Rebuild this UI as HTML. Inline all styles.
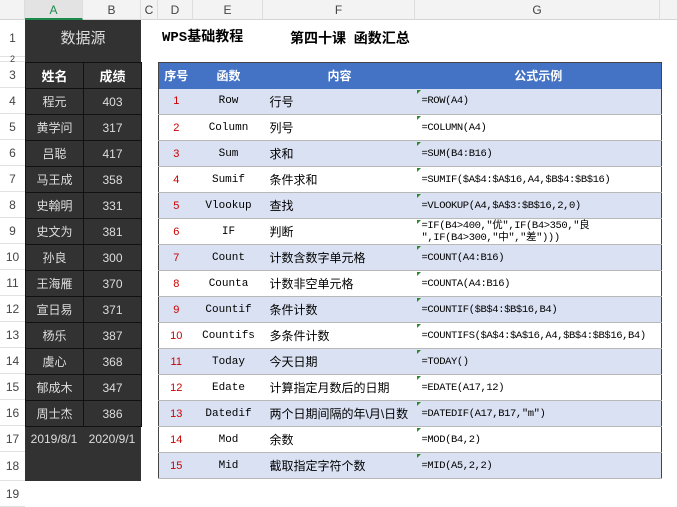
<!DOCTYPE html>
<html><head><meta charset="utf-8"><style>
*{margin:0;padding:0;box-sizing:border-box}
body{width:677px;height:500px;overflow:hidden;background:#fff;font-family:"Liberation Sans","Noto Sans CJK SC",sans-serif;position:relative}
.ch{position:absolute;top:0;height:20px;background:#f3f3f3;border-bottom:1px solid #d4d4d4;width:677px;font-size:12px;color:#444}
.ch div{position:absolute;top:0;height:20px;line-height:20px;text-align:center;border-right:1px solid #ddd}
.rh{position:absolute;left:0;width:25px;font-size:12px;color:#444;text-align:center}
.rh div{position:absolute;left:0;width:25px;border-bottom:1px solid #e2e2e2}
.dark{position:absolute;left:25px;top:20px;width:116px;height:461px;background:#323232;color:#eee}
table{border-collapse:collapse;position:absolute;table-layout:fixed}
.l td{border:1px solid #111;height:26px;text-align:center;font-size:12px;color:#ddd}
.t{left:158px;top:62px;width:503px;border:1px solid #444}
.t td{height:26px;font-size:11px;border-bottom:1px solid #b8b8b8;white-space:nowrap;overflow:hidden;padding:0}
.t tr:nth-child(even) td{background:#d9e1f2}
.t th{background:#4472c4;color:#fff;height:26px;font-size:12px;white-space:nowrap;padding:0}
.n{color:#c00;text-align:center}
.f{text-align:center;font-family:"Liberation Mono","Noto Sans CJK SC",monospace}
.c{padding-left:6px!important;font-size:12px!important}
.g{padding-left:6px!important;font-family:"Liberation Mono","Noto Sans CJK SC",monospace;font-size:10.5px!important;position:relative;letter-spacing:-0.4px}
.g:before{content:"";position:absolute;left:1px;top:1px;border-top:4px solid #2a8a2a;border-right:4px solid transparent}
</style></head><body>
<div class="ch">
<div style="left:0;width:25px"></div>
<div style="left:25px;width:58px;background:#e3e3e3;color:#1a8a4a;border-bottom:2px solid #1a8a4a">A</div>
<div style="left:83px;width:58px">B</div>
<div style="left:141px;width:17px">C</div>
<div style="left:158px;width:35px">D</div>
<div style="left:193px;width:70px">E</div>
<div style="left:263px;width:152px">F</div>
<div style="left:415px;width:245px">G</div>
</div>
<div class="rh">
<div style="top:20px;height:37px;line-height:37px">1</div>
<div style="top:57px;height:5px;line-height:5px;font-size:9px">2</div>
<div style="top:62px;height:26px;line-height:26px">3</div>
<div style="top:88px;height:26px;line-height:26px">4</div>
<div style="top:114px;height:26px;line-height:26px">5</div>
<div style="top:140px;height:26px;line-height:26px">6</div>
<div style="top:166px;height:26px;line-height:26px">7</div>
<div style="top:192px;height:26px;line-height:26px">8</div>
<div style="top:218px;height:26px;line-height:26px">9</div>
<div style="top:244px;height:26px;line-height:26px">10</div>
<div style="top:270px;height:26px;line-height:26px">11</div>
<div style="top:296px;height:26px;line-height:26px">12</div>
<div style="top:322px;height:26px;line-height:26px">13</div>
<div style="top:348px;height:26px;line-height:26px">14</div>
<div style="top:374px;height:26px;line-height:26px">15</div>
<div style="top:400px;height:26px;line-height:26px">16</div>
<div style="top:426px;height:26px;line-height:26px">17</div>
<div style="top:452px;height:29px;line-height:29px">18</div>
<div style="top:481px;height:26px;line-height:26px">19</div>
</div>
<div class="dark">
<div style="height:37px;line-height:37px;text-align:center;font-size:15px;color:#ddd">数据源</div>
</div>
<table class="l" style="left:25px;top:62px">
<tr><td style="width:58px;font-weight:bold;font-size:13px;color:#fff">姓名</td><td style="width:58px;font-weight:bold;font-size:13px;color:#fff">成绩</td></tr>
<tr><td>程元</td><td>403</td></tr><tr><td>黄学问</td><td>317</td></tr><tr><td>吕聪</td><td>417</td></tr><tr><td>马王成</td><td>358</td></tr><tr><td>史翰明</td><td>331</td></tr><tr><td>史文为</td><td>381</td></tr><tr><td>孙良</td><td>300</td></tr><tr><td>王海雁</td><td>370</td></tr><tr><td>宣日易</td><td>371</td></tr><tr><td>杨乐</td><td>387</td></tr><tr><td>虞心</td><td>368</td></tr><tr><td>郁成木</td><td>347</td></tr><tr><td>周士杰</td><td>386</td></tr>
</table>
<div style="position:absolute;left:25px;top:426px;width:116px;height:26px;line-height:26px;color:#ddd;font-size:12px;display:flex"><span style="width:58px;text-align:center">2019/8/1</span><span style="width:58px;text-align:center">2020/9/1</span></div>
<div style="position:absolute;left:162px;top:20px;height:37px;line-height:37px;font-size:14px;font-weight:bold;font-family:'Liberation Mono','Noto Sans CJK SC',monospace">WPS基础教程</div>
<div style="position:absolute;left:290px;top:20px;height:37px;line-height:37px;font-size:14px;font-weight:bold">第四十课&nbsp;&nbsp;函数汇总</div>
<table class="t">
<colgroup><col style="width:35px"><col style="width:70px"><col style="width:152px"><col style="width:246px"></colgroup>
<tr><th>序号</th><th>函数</th><th>内容</th><th>公式示例</th></tr>
<tr><td class="n">1</td><td class="f">Row</td><td class="c">行号</td><td class="g">=ROW(A4)</td></tr>
<tr><td class="n">2</td><td class="f">Column</td><td class="c">列号</td><td class="g">=COLUMN(A4)</td></tr>
<tr><td class="n">3</td><td class="f">Sum</td><td class="c">求和</td><td class="g">=SUM(B4:B16)</td></tr>
<tr><td class="n">4</td><td class="f">Sumif</td><td class="c">条件求和</td><td class="g">=SUMIF($A$4:$A$16,A4,$B$4:$B$16)</td></tr>
<tr><td class="n">5</td><td class="f">Vlookup</td><td class="c">查找</td><td class="g">=VLOOKUP(A4,$A$3:$B$16,2,0)</td></tr>
<tr><td class="n">6</td><td class="f">IF</td><td class="c">判断</td><td class="g" style="line-height:12px">=IF(B4&gt;400,"优",IF(B4&gt;350,"良<br>",IF(B4&gt;300,"中","差")))</td></tr>
<tr><td class="n">7</td><td class="f">Count</td><td class="c">计数含数字单元格</td><td class="g">=COUNT(A4:B16)</td></tr>
<tr><td class="n">8</td><td class="f">Counta</td><td class="c">计数非空单元格</td><td class="g">=COUNTA(A4:B16)</td></tr>
<tr><td class="n">9</td><td class="f">Countif</td><td class="c">条件计数</td><td class="g">=COUNTIF($B$4:$B$16,B4)</td></tr>
<tr><td class="n">10</td><td class="f">Countifs</td><td class="c">多条件计数</td><td class="g">=COUNTIFS($A$4:$A$16,A4,$B$4:$B$16,B4)</td></tr>
<tr><td class="n">11</td><td class="f">Today</td><td class="c">今天日期</td><td class="g">=TODAY()</td></tr>
<tr><td class="n">12</td><td class="f">Edate</td><td class="c">计算指定月数后的日期</td><td class="g">=EDATE(A17,12)</td></tr>
<tr><td class="n">13</td><td class="f">Datedif</td><td class="c">两个日期间隔的年\月\日数</td><td class="g">=DATEDIF(A17,B17,"m")</td></tr>
<tr><td class="n">14</td><td class="f">Mod</td><td class="c">余数</td><td class="g">=MOD(B4,2)</td></tr>
<tr><td class="n">15</td><td class="f">Mid</td><td class="c">截取指定字符个数</td><td class="g">=MID(A5,2,2)</td></tr>
</table>
</body></html>
